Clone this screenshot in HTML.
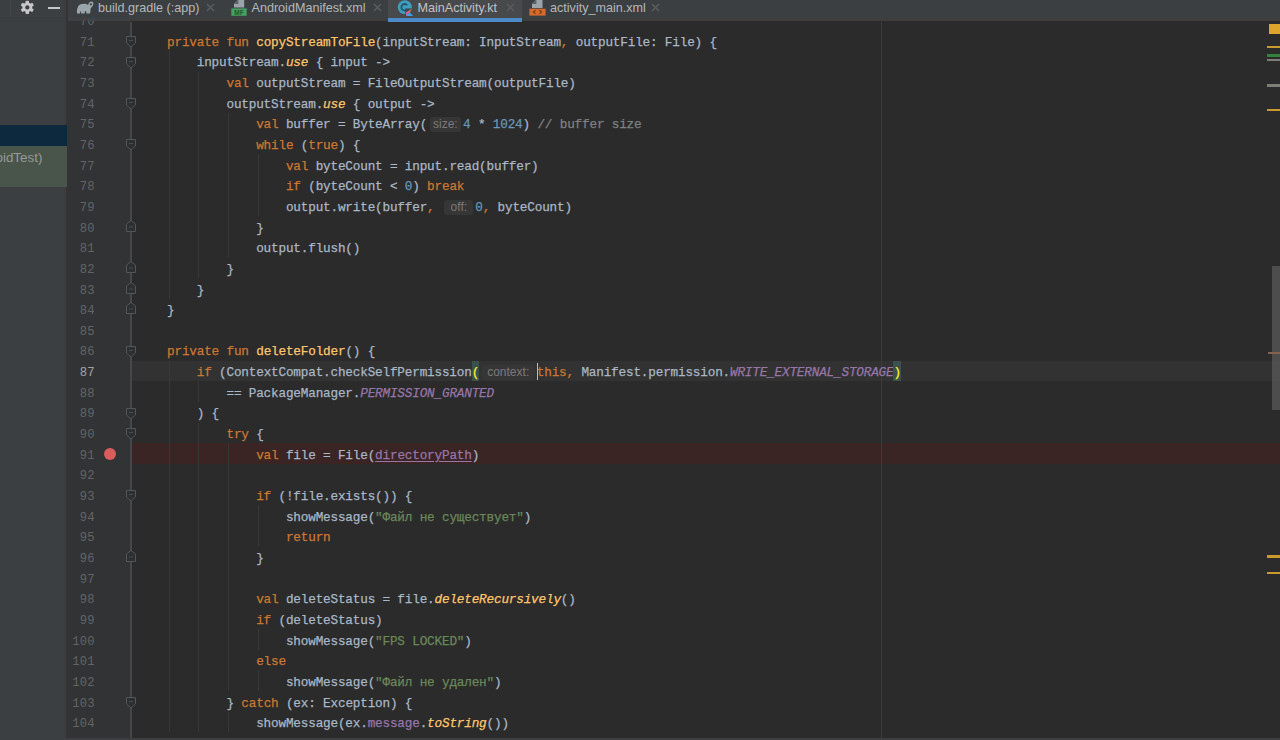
<!DOCTYPE html>
<html><head><meta charset="utf-8"><style>
*{margin:0;padding:0;box-sizing:border-box}
html,body{width:1280px;height:740px;overflow:hidden;background:#2b2b2b;font-family:"Liberation Sans",sans-serif;position:relative}
.a{position:absolute}
#left{left:0;top:0;width:68px;height:740px;background:#3c3f41}
#lefthdr{left:0;top:0;width:64px;height:18px;background:#3c3f41}
#lefthdrb{left:0;top:17px;width:64px;height:5px;background:#3a3d3f}
#leftedge{left:64px;top:0;width:4px;height:738px;background:linear-gradient(90deg,#3d3d3f 0,#3d3d3f 2.5px,#343436 2.5px)}
#sel{left:0;top:125px;width:66.5px;height:21px;background:#0d293e}
#grn{left:0;top:146px;width:66.5px;height:41px;background:#49544a}
#grntxt{left:-4.5px;top:148px;height:20px;line-height:20px;font-size:13.4px;color:#969b95;white-space:nowrap}
#tabs{left:68px;top:0;width:1212px;height:17.5px;background:#3c3f41}
#tabsb{left:68px;top:17.5px;width:1212px;height:3.7px;background:rgba(67,67,69,0.8)}
#seltab{left:388px;top:0;width:134px;height:17.5px;background:#47494b}
#selul{left:388px;top:17.6px;width:134px;height:4px;background:#4e8ac8}
.tt{position:absolute;top:0;height:18px;line-height:17px;font-size:12.6px;color:#b5b7b9;white-space:nowrap}
.x{position:absolute;top:3.3px}
#gutter{left:68px;top:17.5px;width:62px;height:721px;background:#313335}
#foldline{left:130px;top:21.5px;width:1.5px;height:716.5px;background:#46474a}
.ln{position:absolute;left:137.30px;height:20.65px;line-height:20.65px;white-space:pre;font-family:"Liberation Mono",monospace;font-size:12.7px;letter-spacing:-0.184px;color:#a9b7c6;-webkit-text-stroke:0.25px currentColor}
.k{color:#cc7832} .kc{color:#cc7832} .f{color:#ffc66d} .d{color:#a9b7c6} .n{color:#6897bb} .s{color:#6a8759} .c{color:#808080}
.p{color:#9876aa;font-style:italic} .i{color:#ffc66d;font-style:italic} .pm{color:#9876aa}
.u{color:#9876aa;text-decoration:underline;text-underline-offset:2px}
.bm{display:inline-block;position:relative;top:-2.4px;padding-top:2.4px;height:20.65px;vertical-align:top;background:#3b514d;color:#ffef28}
.h{display:inline-block;position:relative;height:20.65px;vertical-align:top}
.h b{position:absolute;left:2.5px;right:2px;top:1.9px;height:15px;line-height:15px;font-weight:normal;font-family:"Liberation Sans",sans-serif;font-size:12px;letter-spacing:0;color:#7a7a7a;background:#363636;border-radius:3px;text-align:center;-webkit-text-stroke:0}
.num{position:absolute;left:68px;width:26.6px;text-align:right;height:20.65px;line-height:20.65px;font-family:"Liberation Mono",monospace;font-size:12.2px;letter-spacing:0.1px;color:#616467;-webkit-text-stroke:0.05px currentColor}
.num.cur{color:#a4a3a3}
.g{position:absolute;width:1px;background:#373737}
.fm{position:absolute;left:126px}
#margin{left:881px;top:21.5px;width:1px;height:716.5px;background:#3c3c3c}
#curline{left:132px;width:1148px;height:20.65px;background:#323232}
#bpline{left:132px;width:1148px;height:20.65px;background:#3a2424}
#caret{left:537px;width:1.2px;background:#bdbdbd}
#bp{left:103.5px;width:12px;height:12px;border-radius:50%;background:#db5c5c}
#bottom{left:0;top:738px;width:1280px;height:2px;background:#3c3f41}
#thumb{left:1272px;top:265.5px;width:8px;height:144.5px;background:rgba(90,90,90,0.75)}
.mk{position:absolute;left:1267px;width:13px;height:2.5px}
</style></head><body>
<div class="a" id="left"></div>
<div class="a" id="leftedge"></div>
<div class="a" id="sel"></div>
<div class="a" id="grn"></div>
<div class="a" id="grntxt">oidTest)</div>
<div class="a" id="gutter"></div>
<div class="a" id="curline" style="top:360.70px"></div>
<div class="a" id="bpline" style="top:443.30px"></div>
<div class="a" id="margin"></div>
<div class="g" style="left:168.5px;top:51.0px;height:247.8px"></div><div class="g" style="left:198.3px;top:71.6px;height:206.5px"></div><div class="g" style="left:228.0px;top:112.9px;height:144.6px"></div><div class="g" style="left:257.8px;top:154.2px;height:62.0px"></div><div class="g" style="left:168.5px;top:360.7px;height:371.7px"></div><div class="g" style="left:198.3px;top:381.3px;height:20.6px"></div><div class="g" style="left:198.3px;top:422.6px;height:309.7px"></div><div class="g" style="left:228.0px;top:443.3px;height:247.8px"></div><div class="g" style="left:257.8px;top:505.2px;height:41.3px"></div><div class="g" style="left:257.8px;top:629.1px;height:20.6px"></div><div class="g" style="left:257.8px;top:670.4px;height:20.6px"></div><div class="g" style="left:228.0px;top:711.7px;height:20.6px"></div>
<div class="ln" style="top:12.05px"></div><div class="ln" style="top:32.70px">    <span class="k">private fun </span><span class="f">copyStreamToFile</span><span class="d">(inputStream: InputStream</span><span class="k">,</span><span class="d"> outputFile: File) {</span></div><div class="ln" style="top:53.35px">        <span class="d">inputStream.</span><span class="i">use</span><span class="d"> { input -&gt;</span></div><div class="ln" style="top:74.00px">            <span class="k">val </span><span class="d">outputStream = FileOutputStream(outputFile)</span></div><div class="ln" style="top:94.65px">            <span class="d">outputStream.</span><span class="i">use</span><span class="d"> { output -&gt;</span></div><div class="ln" style="top:115.30px">                <span class="k">val </span><span class="d">buffer = ByteArray(</span><span class="h" style="width:36.0px"><b>size:</b></span><span class="n">4</span><span class="d"> * </span><span class="n">1024</span><span class="d">) </span><span class="c">// buffer size</span></div><div class="ln" style="top:135.95px">                <span class="k">while </span><span class="d">(</span><span class="k">true</span><span class="d">) {</span></div><div class="ln" style="top:156.60px">                    <span class="k">val </span><span class="d">byteCount = input.read(buffer)</span></div><div class="ln" style="top:177.25px">                    <span class="k">if </span><span class="d">(byteCount &lt; </span><span class="n">0</span><span class="d">) </span><span class="k">break</span></div><div class="ln" style="top:197.90px">                    <span class="d">output.write(buffer</span><span class="k">,</span><span class="d"> </span><span class="h" style="width:33.3px"><b>off:</b></span><span class="n">0</span><span class="k">,</span><span class="d"> byteCount)</span></div><div class="ln" style="top:218.55px">                <span class="d">}</span></div><div class="ln" style="top:239.20px">                <span class="d">output.flush()</span></div><div class="ln" style="top:259.85px">            <span class="d">}</span></div><div class="ln" style="top:280.50px">        <span class="d">}</span></div><div class="ln" style="top:301.15px">    <span class="d">}</span></div><div class="ln" style="top:321.80px"></div><div class="ln" style="top:342.45px">    <span class="k">private fun </span><span class="f">deleteFolder</span><span class="d">() {</span></div><div class="ln" style="top:363.10px">        <span class="k">if </span><span class="d">(ContextCompat.checkSelfPermission</span><span class="bm">(</span><span class="h" style="width:57.7px"><b>context:</b></span><span class="kc">this</span><span class="k">,</span><span class="d"> Manifest.permission.</span><span class="p">WRITE_EXTERNAL_STORAGE</span><span class="bm">)</span></div><div class="ln" style="top:383.75px">            <span class="d">== PackageManager.</span><span class="p">PERMISSION_GRANTED</span></div><div class="ln" style="top:404.40px">        <span class="d">) {</span></div><div class="ln" style="top:425.05px">            <span class="k">try </span><span class="d">{</span></div><div class="ln" style="top:445.70px">                <span class="k">val </span><span class="d">file = File(</span><span class="u">directoryPath</span><span class="d">)</span></div><div class="ln" style="top:466.35px"></div><div class="ln" style="top:487.00px">                <span class="k">if </span><span class="d">(!file.exists()) {</span></div><div class="ln" style="top:507.65px">                    <span class="d">showMessage(</span><span class="s">&quot;Файл не существует&quot;</span><span class="d">)</span></div><div class="ln" style="top:528.30px">                    <span class="k">return</span></div><div class="ln" style="top:548.95px">                <span class="d">}</span></div><div class="ln" style="top:569.60px"></div><div class="ln" style="top:590.25px">                <span class="k">val </span><span class="d">deleteStatus = file.</span><span class="i">deleteRecursively</span><span class="d">()</span></div><div class="ln" style="top:610.90px">                <span class="k">if </span><span class="d">(deleteStatus)</span></div><div class="ln" style="top:631.55px">                    <span class="d">showMessage(</span><span class="s">&quot;FPS LOCKED&quot;</span><span class="d">)</span></div><div class="ln" style="top:652.20px">                <span class="k">else</span></div><div class="ln" style="top:672.85px">                    <span class="d">showMessage(</span><span class="s">&quot;Файл не удален&quot;</span><span class="d">)</span></div><div class="ln" style="top:693.50px">            <span class="d">} </span><span class="k">catch </span><span class="d">(ex: Exception) {</span></div><div class="ln" style="top:714.15px">                <span class="d">showMessage(ex.</span><span class="pm">message</span><span class="d">.</span><span class="i">toString</span><span class="d">())</span></div>
<div class="num" style="top:12.05px">70</div><div class="num" style="top:32.70px">71</div><div class="num" style="top:53.35px">72</div><div class="num" style="top:74.00px">73</div><div class="num" style="top:94.65px">74</div><div class="num" style="top:115.30px">75</div><div class="num" style="top:135.95px">76</div><div class="num" style="top:156.60px">77</div><div class="num" style="top:177.25px">78</div><div class="num" style="top:197.90px">79</div><div class="num" style="top:218.55px">80</div><div class="num" style="top:239.20px">81</div><div class="num" style="top:259.85px">82</div><div class="num" style="top:280.50px">83</div><div class="num" style="top:301.15px">84</div><div class="num" style="top:321.80px">85</div><div class="num" style="top:342.45px">86</div><div class="num cur" style="top:363.10px">87</div><div class="num" style="top:383.75px">88</div><div class="num" style="top:404.40px">89</div><div class="num" style="top:425.05px">90</div><div class="num" style="top:445.70px">91</div><div class="num" style="top:466.35px">92</div><div class="num" style="top:487.00px">93</div><div class="num" style="top:507.65px">94</div><div class="num" style="top:528.30px">95</div><div class="num" style="top:548.95px">96</div><div class="num" style="top:569.60px">97</div><div class="num" style="top:590.25px">98</div><div class="num" style="top:610.90px">99</div><div class="num" style="top:631.55px">100</div><div class="num" style="top:652.20px">101</div><div class="num" style="top:672.85px">102</div><div class="num" style="top:693.50px">103</div><div class="num" style="top:714.15px">104</div>
<div class="a" id="foldline"></div>
<svg class="fm" style="top:35.8px" width="10" height="12" viewBox="0 0 10 12"><path d="M0.5 0.5 H9.5 V7 L5 11 L0.5 7 Z" fill="#2e2f30" stroke="#535557" stroke-width="1"/><path d="M3 4.5 H7" stroke="#4a4c4e" stroke-width="1"/></svg><svg class="fm" style="top:56.5px" width="10" height="12" viewBox="0 0 10 12"><path d="M0.5 0.5 H9.5 V7 L5 11 L0.5 7 Z" fill="#2e2f30" stroke="#535557" stroke-width="1"/><path d="M3 4.5 H7" stroke="#4a4c4e" stroke-width="1"/></svg><svg class="fm" style="top:97.8px" width="10" height="12" viewBox="0 0 10 12"><path d="M0.5 0.5 H9.5 V7 L5 11 L0.5 7 Z" fill="#2e2f30" stroke="#535557" stroke-width="1"/><path d="M3 4.5 H7" stroke="#4a4c4e" stroke-width="1"/></svg><svg class="fm" style="top:139.1px" width="10" height="12" viewBox="0 0 10 12"><path d="M0.5 0.5 H9.5 V7 L5 11 L0.5 7 Z" fill="#2e2f30" stroke="#535557" stroke-width="1"/><path d="M3 4.5 H7" stroke="#4a4c4e" stroke-width="1"/></svg><svg class="fm" style="top:219.7px" width="10" height="12" viewBox="0 0 10 12"><path d="M0.5 11.5 H9.5 V4 L5 0.5 L0.5 4 Z" fill="#2e2f30" stroke="#535557" stroke-width="1"/><path d="M3 7 H7" stroke="#4a4c4e" stroke-width="1"/></svg><svg class="fm" style="top:261.0px" width="10" height="12" viewBox="0 0 10 12"><path d="M0.5 11.5 H9.5 V4 L5 0.5 L0.5 4 Z" fill="#2e2f30" stroke="#535557" stroke-width="1"/><path d="M3 7 H7" stroke="#4a4c4e" stroke-width="1"/></svg><svg class="fm" style="top:281.6px" width="10" height="12" viewBox="0 0 10 12"><path d="M0.5 11.5 H9.5 V4 L5 0.5 L0.5 4 Z" fill="#2e2f30" stroke="#535557" stroke-width="1"/><path d="M3 7 H7" stroke="#4a4c4e" stroke-width="1"/></svg><svg class="fm" style="top:302.3px" width="10" height="12" viewBox="0 0 10 12"><path d="M0.5 11.5 H9.5 V4 L5 0.5 L0.5 4 Z" fill="#2e2f30" stroke="#535557" stroke-width="1"/><path d="M3 7 H7" stroke="#4a4c4e" stroke-width="1"/></svg><svg class="fm" style="top:345.6px" width="10" height="12" viewBox="0 0 10 12"><path d="M0.5 0.5 H9.5 V7 L5 11 L0.5 7 Z" fill="#2e2f30" stroke="#535557" stroke-width="1"/><path d="M3 4.5 H7" stroke="#4a4c4e" stroke-width="1"/></svg><svg class="fm" style="top:407.5px" width="10" height="12" viewBox="0 0 10 12"><path d="M0.5 0.5 H9.5 V7 L5 11 L0.5 7 Z" fill="#2e2f30" stroke="#535557" stroke-width="1"/><path d="M3 4.5 H7" stroke="#4a4c4e" stroke-width="1"/></svg><svg class="fm" style="top:428.2px" width="10" height="12" viewBox="0 0 10 12"><path d="M0.5 0.5 H9.5 V7 L5 11 L0.5 7 Z" fill="#2e2f30" stroke="#535557" stroke-width="1"/><path d="M3 4.5 H7" stroke="#4a4c4e" stroke-width="1"/></svg><svg class="fm" style="top:490.1px" width="10" height="12" viewBox="0 0 10 12"><path d="M0.5 0.5 H9.5 V7 L5 11 L0.5 7 Z" fill="#2e2f30" stroke="#535557" stroke-width="1"/><path d="M3 4.5 H7" stroke="#4a4c4e" stroke-width="1"/></svg><svg class="fm" style="top:550.1px" width="10" height="12" viewBox="0 0 10 12"><path d="M0.5 11.5 H9.5 V4 L5 0.5 L0.5 4 Z" fill="#2e2f30" stroke="#535557" stroke-width="1"/><path d="M3 7 H7" stroke="#4a4c4e" stroke-width="1"/></svg><svg class="fm" style="top:696.6px" width="10" height="12" viewBox="0 0 10 12"><path d="M0.5 0.5 H9.5 V7 L5 11 L0.5 7 Z" fill="#2e2f30" stroke="#535557" stroke-width="1"/><path d="M3 4.5 H7" stroke="#4a4c4e" stroke-width="1"/></svg>
<div class="a" id="caret" style="top:362.7px;height:17px"></div>
<div class="a" id="bp" style="top:448.4px"></div>
<div class="a" id="thumb"></div>
<div class="mk" style="top:23.5px;height:10.5px;left:1269px;width:11px;background:#dea52c"></div>
<div class="mk" style="top:45.5px;background:#c99a2c"></div>
<div class="mk" style="top:54px;background:#33813d"></div>
<div class="mk" style="top:58.5px;background:#7f7d78"></div>
<div class="mk" style="top:84px;background:#7f7d78"></div>
<div class="mk" style="top:108.5px;background:#c99a2c"></div>
<div class="mk" style="top:352.3px;height:1.8px;left:1267.5px;background:#86614e"></div>
<div class="mk" style="top:555px;background:#c99a2c"></div>
<div class="mk" style="top:571.5px;background:#c99a2c"></div>
<div class="a" id="bottom"></div>
<div class="a" id="lefthdr"></div>
<div class="a" id="lefthdrb"></div>
<div class="a" style="left:10px;top:0;width:1px;height:16px;background:#45484a"></div>
<svg class="a" style="left:20px;top:0" width="15" height="15" viewBox="0 0 15 15">
<g fill="#c5c7c9" transform="translate(7.3 7.4)">
<circle r="4.9"/>
<rect x="-1.7" y="-6.7" width="3.4" height="13.4" rx="0.8"/>
<rect x="-1.7" y="-6.7" width="3.4" height="13.4" rx="0.8" transform="rotate(60)"/>
<rect x="-1.7" y="-6.7" width="3.4" height="13.4" rx="0.8" transform="rotate(120)"/>
</g>
<circle cx="7.3" cy="7.4" r="2.1" fill="#3c3f41"/>
</svg>
<div class="a" style="left:47.5px;top:6.5px;width:12.5px;height:2px;background:#c5c7c9"></div>
<div class="a" id="tabs"></div>
<div class="a" id="tabsb"></div>
<div class="a" id="seltab"></div>
<div class="a" id="selul"></div>
<!-- gradle icon -->
<svg class="a" style="left:0;top:0" width="100" height="16" viewBox="0 0 100 16">
<path d="M77 13.6 C76.7 9 77.6 5.4 80.6 4.2 C83 3.3 86.2 3.5 88.2 4.8 C88.6 3.2 89.8 1.5 91.4 1.5 C92.9 1.5 93.6 2.8 93.3 4.3 C93 5.8 92.1 7.2 90.7 8.3 L90.1 13.6 L86.4 13.6 L86.1 11.3 L84.8 11.3 L84.6 13.6 L81.2 13.6 L80.9 11.6 L80.1 11.6 L80 13.6 Z" fill="#9aa4ab"/>
<circle cx="90.9" cy="4.3" r="1.1" fill="#3c3f41"/>
</svg>
<div class="tt" style="left:98px">build.gradle (:app)</div>
<svg class="x" style="left:206px" width="9" height="9" viewBox="0 0 9 9"><path d="M1 1 L8 8 M8 1 L1 8" stroke="#5a5d60" stroke-width="1.5"/></svg>
<!-- manifest icon -->
<svg class="a" style="left:231px;top:0" width="16" height="16" viewBox="0 0 16 16">
<path d="M3 4 L7 0 H13.2 V7.6 H3 Z" fill="#9aa3a9"/><path d="M3 4 H7.4 V0 Z" fill="#5b6164"/>
<rect x="0.3" y="8.4" width="15.4" height="7.4" fill="#45a064"/>
<text x="8" y="15" font-size="6.5" font-family="Liberation Sans" fill="#1e5a2a" text-anchor="middle" font-weight="bold">MF</text>
</svg>
<div class="tt" style="left:251.5px">AndroidManifest.xml</div>
<svg class="x" style="left:373px" width="9" height="9" viewBox="0 0 9 9"><path d="M1 1 L8 8 M8 1 L1 8" stroke="#5a5d60" stroke-width="1.5"/></svg>
<!-- kotlin class icon -->
<svg class="a" style="left:396px;top:0" width="18" height="17" viewBox="0 0 18 17">
<circle cx="8.8" cy="7.3" r="7" fill="#3f9dbd"/>
<path d="M11.2 5.2 A3.3 3.3 0 1 0 11.2 9.4" fill="none" stroke="#23566a" stroke-width="1.8"/>
<path d="M9.3 8.5 L17.3 8.5 L9.3 16.5 Z" fill="#3f3f55"/>
<path d="M10 16 L13.6 12 L17 16 Z" fill="#3aa2ea"/>
<path d="M10 16 L10 12.5 L16.5 8.5 L13.6 12 Z" fill="#e8913d"/>
<path d="M10 16 L10 12.5 L12 11.3 L13.6 12 Z" fill="#d75a9e"/>
</svg>
<div class="tt" style="left:417.5px;color:#c0c2c4">MainActivity.kt</div>
<svg class="x" style="left:505.5px" width="9" height="9" viewBox="0 0 9 9"><path d="M1 1 L8 8 M8 1 L1 8" stroke="#5a5d60" stroke-width="1.5"/></svg>
<!-- layout xml icon -->
<svg class="a" style="left:529px;top:0" width="17" height="16" viewBox="0 0 17 16">
<path d="M3 4 L7 0 H13.5 V8 H3 Z" fill="#9aa3a9"/><path d="M3 4 H7.4 V0 Z" fill="#5b6164"/>
<rect x="0.4" y="8.7" width="16.2" height="6.9" fill="#d46a2c"/>
<path d="M6.5 10.3 L4.5 12.1 L6.5 13.9 M10.5 10.3 L12.5 12.1 L10.5 13.9" stroke="#7a3a10" stroke-width="1.2" fill="none"/>
</svg>
<div class="tt" style="left:550px">activity_main.xml</div>
<svg class="x" style="left:650.5px" width="9" height="9" viewBox="0 0 9 9"><path d="M1 1 L8 8 M8 1 L1 8" stroke="#5a5d60" stroke-width="1.5"/></svg>
</body></html>
